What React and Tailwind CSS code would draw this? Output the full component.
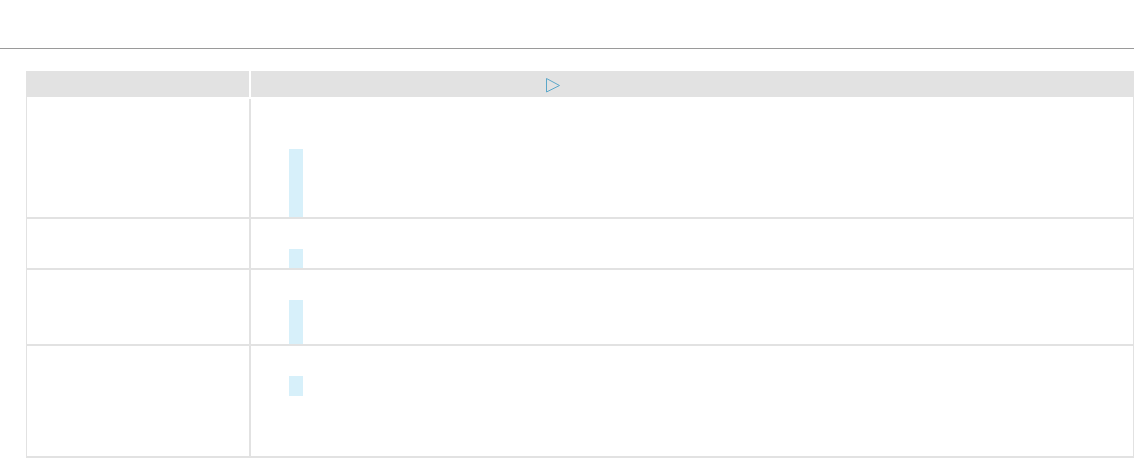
import React from 'react';

// строки таблицы: высота строки и положение голубой полосы
const rows = [
  { h: 120, barTop: 52, barH: 68 },
  { h: 49, barTop: 30, barH: 19 },
  { h: 74, barTop: 30, barH: 44 },
  { h: 110, barTop: 30, barH: 20 },
];

function PlayIcon() {
  return (
    <svg width="15" height="15" viewBox="0 0 15 15" fill="none" className="mt-[3px]">
      <polygon points="0.5,0.5 13.5,7.5 0.5,14" stroke="#5ba7c9" strokeWidth="1" fill="none" />
    </svg>
  );
}

export default function App() {
  return (
    <div className="w-[1136px] h-[458px] bg-white overflow-hidden" style={{ fontFamily: '"Liberation Sans", Arial, sans-serif' }}>
      <div className="h-[48px]" />
      <div className="h-px w-[1134px] bg-[#9a9a9a]" />
      <div className="h-[22px]" />

      <div className="ml-[26px] w-[1108px]">
        {/* шапка */}
        <div className="flex h-[26px]">
          <div className="w-[223px] bg-[#e2e2e2]" />
          <div className="w-[2px] bg-white" />
          <div className="flex-1 bg-[#e2e2e2] flex items-center pl-[295px]">
            <PlayIcon />
          </div>
        </div>

        {/* тело */}
        <div className="border-l border-r border-[#e2e2e2]">
          {rows.map((row, i) => (
            <div key={i} className="flex border-b-2 border-[#e2e2e2]" style={{ height: row.h + 2 }}>
              <div className="w-[222px]" />
              <div className={`w-[2px] bg-[#e2e2e2] ${i === 0 ? 'mt-[2px]' : ''}`} />
              <div className="flex-1 pl-[38px]">
                <div className="w-[14px] bg-[#d7f0fa]" style={{ marginTop: row.barTop, height: row.barH }} />
              </div>
            </div>
          ))}
        </div>
      </div>
    </div>
  );
}
